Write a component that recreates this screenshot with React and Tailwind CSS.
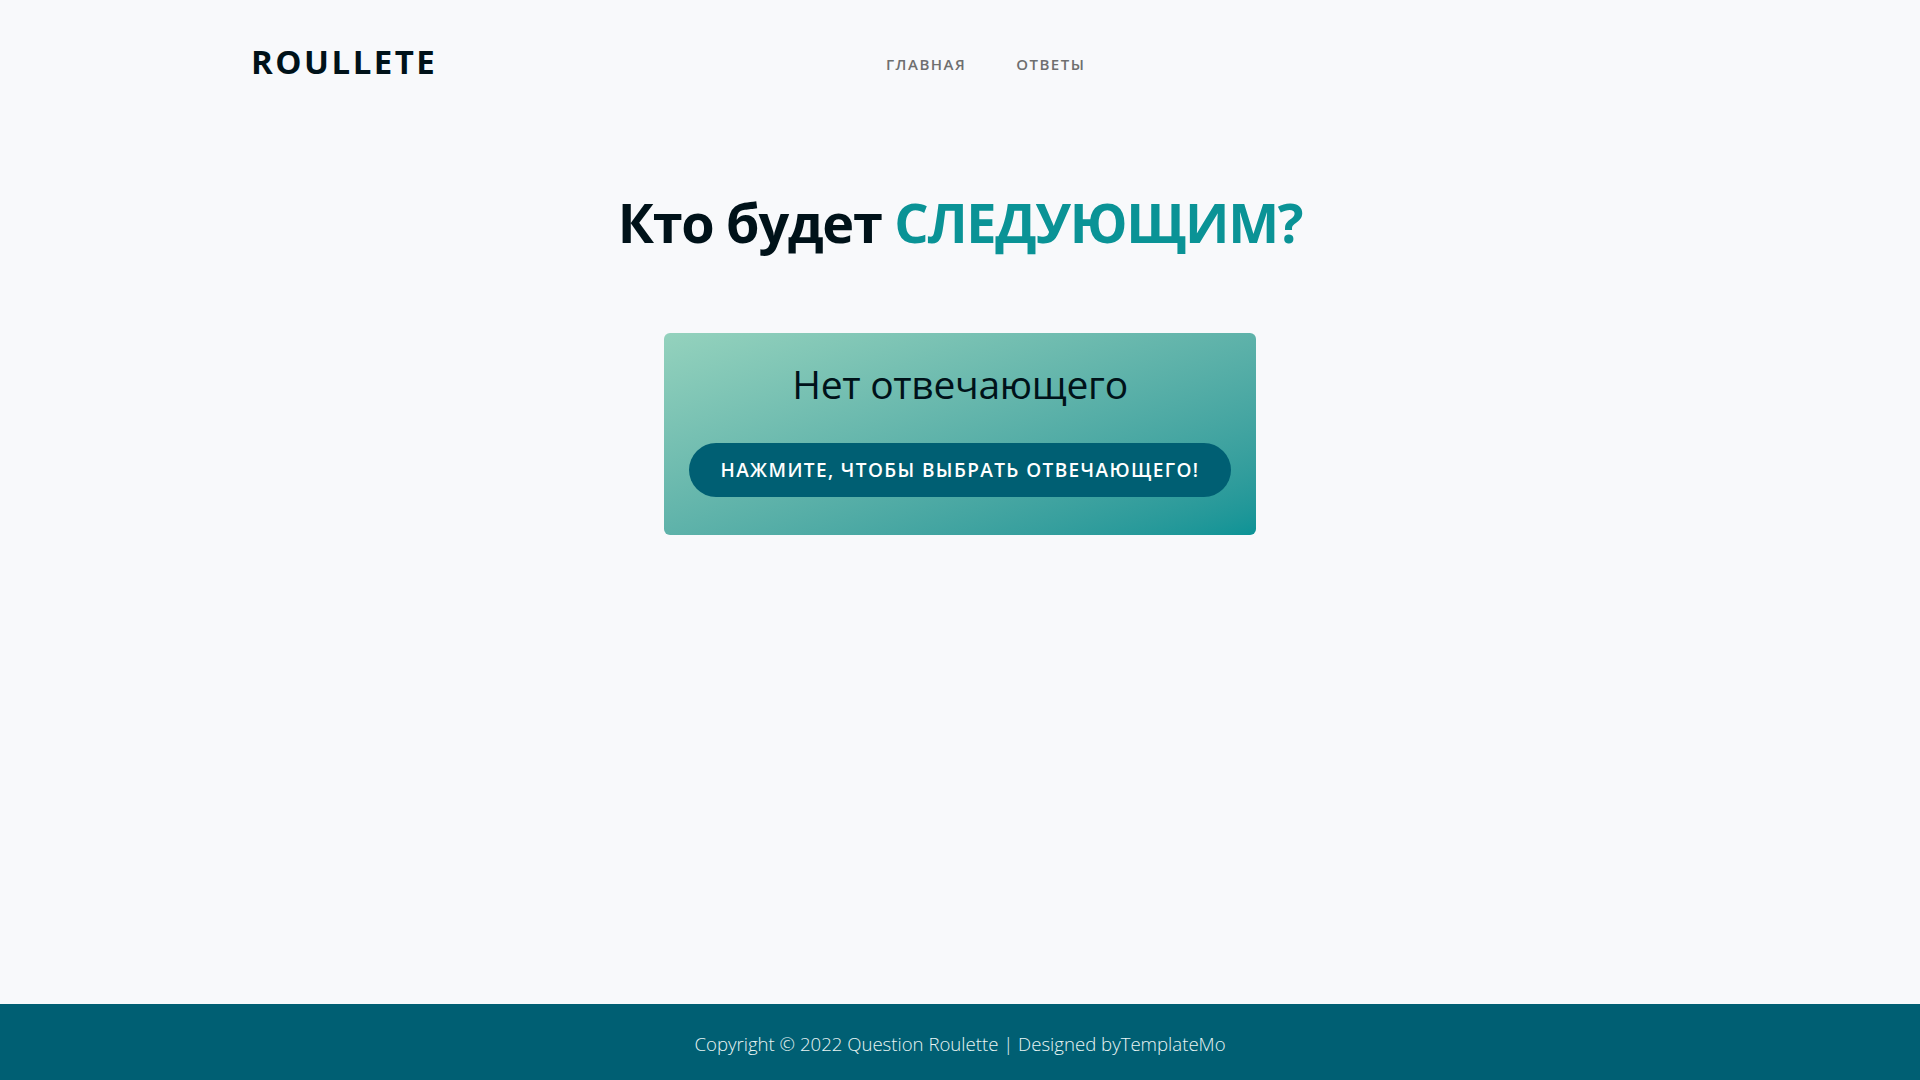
export default function App() {
  const font = { fontFamily: '"Open Sans", "Noto Sans", sans-serif' };
  return (
    <div className="min-h-screen flex flex-col bg-[#f8f9fb] text-[#001219]" style={font}>
      {/* Шапка */}
      <header className="flex items-center h-[124px] pl-[251px]">
        <div className="w-[635px] text-[33px] font-bold tracking-[2.5px] leading-none -mt-[2px]">ROULLETE</div>
        <nav className="flex gap-[50px] text-[15px] font-semibold tracking-[1.5px] text-[#6f6f6f] mt-[4px]">
          <a href="#">ГЛАВНАЯ</a>
          <a href="#">ОТВЕТЫ</a>
        </nav>
      </header>

      {/* Основной блок */}
      <main className="flex-1 flex flex-col items-center">
        <h1 className="mt-[71px] text-[54px] font-bold leading-none tracking-[-1.3px]">
          Кто будет <span className="text-[#0a9396]">СЛЕДУЮЩИМ?</span>
        </h1>

        <div className="mt-[84px] w-[592px] h-[202px] rounded-[6px] bg-gradient-to-br from-[#94d2bd] to-[#0a9396] flex flex-col items-center">
          <h2 className="mt-[31px] text-[39px] leading-none font-normal tracking-[-0.3px]">Нет отвечающего</h2>
          <button className="mt-[40px] w-[542px] h-[54px] rounded-full bg-[#005f73] text-white text-[19px] font-semibold tracking-[1.4px]">
            НАЖМИТЕ, ЧТОБЫ ВЫБРАТЬ ОТВЕЧАЮЩЕГО!
          </button>
        </div>
      </main>

      {/* Подвал */}
      <footer className="h-[76px] bg-[#005f73] flex items-center justify-center">
        <p className="text-[18.6px] font-light text-[#e9f5f3] mt-[3px]">
          Copyright © 2022 Question Roulette | Designed byTemplateMo
        </p>
      </footer>
    </div>
  );
}
